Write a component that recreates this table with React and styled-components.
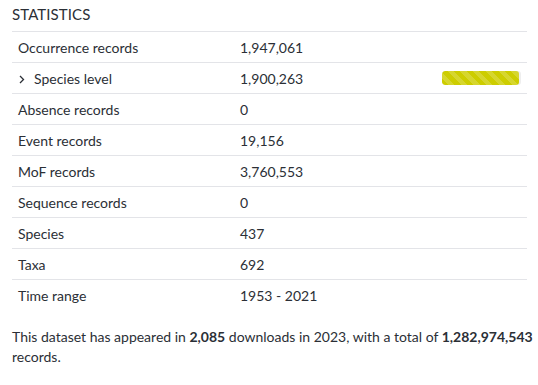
import React from "react";
import styled, { createGlobalStyle } from "styled-components";

const Global = createGlobalStyle`
  html, body { margin: 0; padding: 0; background: #fff; }
  body { font-family: Lato, "Noto Sans", sans-serif; color: #2b2f36; }
`;

const Page = styled.div`
  padding: 4px 11px 0 12px;
`;

const Title = styled.h3`
  margin: 0 0 6px 0;
  font-size: 15px;
  font-weight: 400;
  line-height: 21px;
  letter-spacing: 0.1px;
  color: #2b2f36;
`;

const Table = styled.table`
  width: 100%;
  border-collapse: collapse;
  font-size: 14px;
`;

const Row = styled.tr`
  border-top: 1px solid #e3e4e8;
  height: 31px;
`;

const Label = styled.td`
  padding: 0 6px;
  width: 216px;
  vertical-align: middle;
`;

const Value = styled.td`
  padding: 0;
  vertical-align: middle;
`;

const BarCell = styled.td`
  padding: 0 6px 0 0;
  width: 79px;
  vertical-align: middle;
`;

const Chevron = styled.svg`
  width: 6px;
  height: 9px;
  margin: 0 9px 0 1px;
  vertical-align: -0.5px;
`;

const Track = styled.div`
  width: 79px;
  height: 14px;
  border-radius: 3px;
  background: #eeeeee;
  overflow: hidden;
`;

const Fill = styled.div`
  height: 100%;
  border-radius: 3px;
  background: repeating-linear-gradient(
    45deg,
    #cdcd00 0px,
    #cdcd00 4.5px,
    #d6d62e 4.5px,
    #d6d62e 9px
  );
`;

const Note = styled.p`
  margin: 16px -11px 0 0;
  font-size: 14px;
  line-height: 20px;
  b { font-weight: 700; }
`;

const rows = [
  ["Occurrence records", "1,947,061"],
  ["Species level", "1,900,263", true],
  ["Absence records", "0"],
  ["Event records", "19,156"],
  ["MoF records", "3,760,553"],
  ["Sequence records", "0"],
  ["Species", "437"],
  ["Taxa", "692"],
  ["Time range", "1953 - 2021"],
];

export default function App() {
  const pct = (1900263 / 1947061) * 100;
  return (
    <Page>
      <Global />
      <Title>STATISTICS</Title>
      <Table>
        <tbody>
          {rows.map(([l, v, sub]) => (
            <Row key={l}>
              <Label>
                {sub && (
                  <Chevron viewBox="0 0 6 9">
                    <path d="M1 1 L4.5 4.5 L1 8" fill="none" stroke="#2b2f36" strokeWidth="1.3" />
                  </Chevron>
                )}
                {l}
              </Label>
              <Value>{v}</Value>
              <BarCell>
                {sub && (
                  <Track>
                    <Fill style={{ width: pct + "%" }} />
                  </Track>
                )}
              </BarCell>
            </Row>
          ))}
        </tbody>
      </Table>
      <Note>
        This dataset has appeared in <b>2,085</b> downloads in 2023, with a total of{" "}
        <b>1,282,974,543</b> records.
      </Note>
    </Page>
  );
}
